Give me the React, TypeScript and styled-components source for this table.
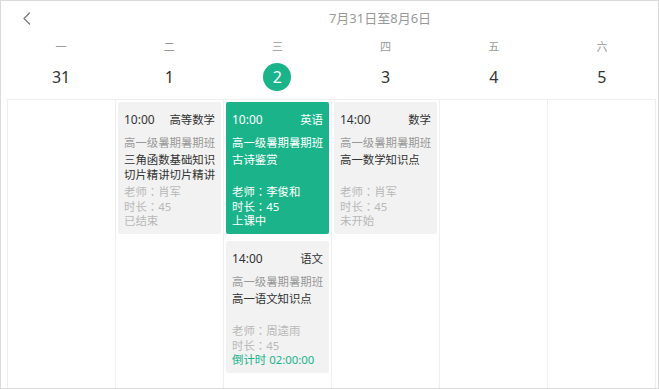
import React from 'react'
import styled, { createGlobalStyle, css } from 'styled-components'

const GREEN = '#1bb38a'

const GlobalStyle = createGlobalStyle`
  html, body {
    margin: 0;
    padding: 0;
    background: #fff;
  }
  body {
    font-family: "Noto Sans", "Noto Sans CJK SC", sans-serif;
  }
`

type LessonState = 'ended' | 'live' | 'pending' | 'countdown'

interface Lesson {
  time: string
  subject: string
  className: string
  title: string
  teacher: string
  duration: number
  state: LessonState
  stateText: string
}

interface Day {
  weekday: string
  date: number
  today?: boolean
  lessons: Lesson[]
}

const days: Day[] = [
  { weekday: '一', date: 31, lessons: [] },
  {
    weekday: '二',
    date: 1,
    lessons: [
      {
        time: '10:00',
        subject: '高等数学',
        className: '高一级暑期暑期班',
        title: '三角函数基础知识切片精讲切片精讲',
        teacher: '肖军',
        duration: 45,
        state: 'ended',
        stateText: '已结束',
      },
    ],
  },
  {
    weekday: '三',
    date: 2,
    today: true,
    lessons: [
      {
        time: '10:00',
        subject: '英语',
        className: '高一级暑期暑期班',
        title: '古诗鉴赏',
        teacher: '李俊和',
        duration: 45,
        state: 'live',
        stateText: '上课中',
      },
      {
        time: '14:00',
        subject: '语文',
        className: '高一级暑期暑期班',
        title: '高一语文知识点',
        teacher: '周逵雨',
        duration: 45,
        state: 'countdown',
        stateText: '倒计时 02:00:00',
      },
    ],
  },
  {
    weekday: '四',
    date: 3,
    lessons: [
      {
        time: '14:00',
        subject: '数学',
        className: '高一级暑期暑期班',
        title: '高一数学知识点',
        teacher: '肖军',
        duration: 45,
        state: 'pending',
        stateText: '未开始',
      },
    ],
  },
  { weekday: '五', date: 4, lessons: [] },
  { weekday: '六', date: 5, lessons: [] },
]

const Frame = styled.div`
  width: 659px;
  height: 389px;
  box-sizing: border-box;
  border: 1px solid #dadada;
  padding: 0 2px 0 6px;
  display: flex;
  flex-direction: column;
  overflow: hidden;
`

const TopBar = styled.div`
  height: 34px;
  display: flex;
  align-items: center;
`

const BackButton = styled.button`
  margin-left: 13px;
  width: 12px;
  height: 16px;
  padding: 0;
  border: none;
  background: none;
  display: flex;
  align-items: center;
  justify-content: center;
  cursor: pointer;
`

const Title = styled.div`
  flex: 1;
  text-align: center;
  padding-left: 72px;
  font-size: 13px;
  color: #999;
  line-height: 18px;
`

const WeekHeader = styled.div`
  display: grid;
  grid-template-columns: repeat(6, 1fr);
  padding: 4px 0 8px;
`

const HeadCell = styled.div`
  display: flex;
  flex-direction: column;
  align-items: center;
  gap: 8px;
`

const Weekday = styled.div`
  font-size: 11px;
  line-height: 16px;
  color: #9a9a9a;
`

const DateNum = styled.div<{ $today?: boolean }>`
  width: 28px;
  height: 28px;
  border-radius: 50%;
  display: flex;
  align-items: center;
  justify-content: center;
  font-size: 16px;
  color: #333;
  ${p =>
    p.$today &&
    css`
      background: ${GREEN};
      color: #fff;
    `}
`

const Body = styled.div`
  flex: 1;
  display: grid;
  grid-template-columns: repeat(6, 1fr);
  border-top: 1px solid #efefef;
  border-right: 1px solid #efefef;
`

const Column = styled.div`
  border-left: 1px solid #efefef;
  padding: 2px;
  display: flex;
  flex-direction: column;
  gap: 7px;
  min-width: 0;
`

const Card = styled.div<{ $active?: boolean }>`
  height: 132px;
  box-sizing: border-box;
  padding: 9px 5px 6px 6px;
  border-radius: 2px;
  display: flex;
  flex-direction: column;
  font-size: 11.4px;
  background: ${p => (p.$active ? GREEN : '#f2f2f2')};
  color: ${p => (p.$active ? '#fff' : '#333')};
`

const CardHead = styled.div`
  display: flex;
  justify-content: space-between;
  align-items: center;
  line-height: 18px;
  padding-right: 1px;
`

const Time = styled.span`
  font-size: 12px;
`

const ClassName = styled.div<{ $active?: boolean }>`
  margin-top: 6px;
  line-height: 15px;
  white-space: nowrap;
  color: ${p => (p.$active ? '#fff' : '#999')};
`

const LessonTitle = styled.div`
  margin-top: 2px;
  line-height: 15px;
  display: -webkit-box;
  -webkit-line-clamp: 2;
  -webkit-box-orient: vertical;
  overflow: hidden;
`

const Footer = styled.div<{ $active?: boolean }>`
  margin-top: auto;
  line-height: 14px;
  color: ${p => (p.$active ? '#fff' : '#b8b8b8')};
`

// centred full-width colon, as in the original font
const Colon = styled.span`
  font-family: "Noto Sans CJK TC", sans-serif;
`

const State = styled.div<{ $countdown?: boolean }>`
  color: ${p => (p.$countdown ? GREEN : 'inherit')};
`

const Chevron = () => (
  <svg width="9" height="13" viewBox="0 0 9 13" fill="none">
    <path d="M7.5 1L2 6.5L7.5 12" stroke="#7a7a7a" strokeWidth="1.3" strokeLinecap="round" strokeLinejoin="round" />
  </svg>
)

const LessonCard = ({ lesson }: { lesson: Lesson }) => {
  const active = lesson.state === 'live'
  return (
    <Card $active={active}>
      <CardHead>
        <Time>{lesson.time}</Time>
        <span>{lesson.subject}</span>
      </CardHead>
      <ClassName $active={active}>{lesson.className}</ClassName>
      <LessonTitle>{lesson.title}</LessonTitle>
      <Footer $active={active}>
        <div>
          老师<Colon>：</Colon>
          {lesson.teacher}
        </div>
        <div>
          时长<Colon>：</Colon>
          {lesson.duration}
        </div>
        <State $countdown={lesson.state === 'countdown'}>{lesson.stateText}</State>
      </Footer>
    </Card>
  )
}

const App = () => {
  return (
    <>
      <GlobalStyle />
      <Frame>
        <TopBar>
          <BackButton aria-label="上一周">
            <Chevron />
          </BackButton>
          <Title>7月31日至8月6日</Title>
        </TopBar>
        <WeekHeader>
          {days.map(d => (
            <HeadCell key={d.date}>
              <Weekday>{d.weekday}</Weekday>
              <DateNum $today={d.today}>{d.date}</DateNum>
            </HeadCell>
          ))}
        </WeekHeader>
        <Body>
          {days.map(d => (
            <Column key={d.date}>
              {d.lessons.map(l => (
                <LessonCard key={l.time} lesson={l} />
              ))}
            </Column>
          ))}
        </Body>
      </Frame>
    </>
  )
}

export default App
